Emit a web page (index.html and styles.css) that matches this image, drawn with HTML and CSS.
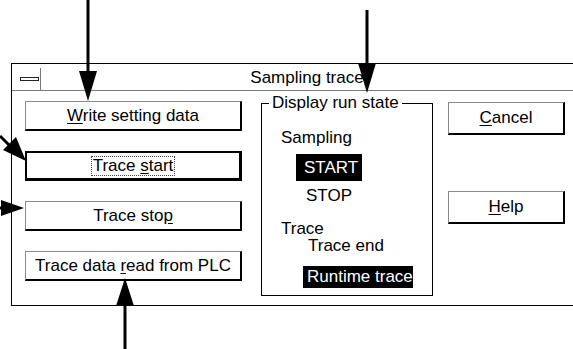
FILE: index.html
```html
<!DOCTYPE html>
<html>
<head>
<meta charset="utf-8">
<link rel="stylesheet" href="styles.css">
</head>
<body>
<div class="window">
  <div class="titlebar">
    <div class="sysmenu"><span class="minus"></span></div>
    <div class="title">Sampling trace</div>
  </div>
  <div class="content">
    <div class="leftcol">
      <div class="btn"><span><u>W</u>rite setting data</span></div>
      <div class="btn btn-default"><span class="focus">Trace <u>s</u>tart</span></div>
      <div class="btn"><span>Trace sto<u>p</u></span></div>
      <div class="btn"><span>Trace data <u>r</u>ead from PLC</span></div>
    </div>
    <fieldset class="group">
      <legend class="legend">Display run state</legend>
      <div class="lbl l-sampling">Sampling</div>
      <div class="hl hl-start">START</div>
      <div class="lbl l-stop">STOP</div>
      <div class="lbl l-trace">Trace</div>
      <div class="lbl l-traceend">Trace end</div>
      <div class="hl hl-runtime">Runtime trace</div>
    </fieldset>
    <div class="rightcol">
      <div class="btn btn-side"><span><u>C</u>ancel</span></div>
      <div class="btn btn-side btn-help"><span><u>H</u>elp</span></div>
    </div>
  </div>
</div>
<svg class="arrows" width="573" height="349" viewBox="0 0 573 349">
  <g stroke="#000" stroke-width="3" fill="none">
    <line x1="88" y1="0" x2="88" y2="76"/>
    <line x1="367" y1="10" x2="367" y2="68"/>
    <line x1="0" y1="136" x2="12" y2="148"/>
    <line x1="0" y1="208" x2="6" y2="208"/>
    <line x1="125" y1="300" x2="125" y2="349"/>
  </g>
  <g fill="#000">
    <polygon points="79,71 97,71 88,101"/>
    <polygon points="358,63 376,63 367,93"/>
    <polygon points="3,150 16,137 26,161"/>
    <polygon points="1,200 1,216 24,208"/>
    <polygon points="116,306 134,306 125,278"/>
  </g>
</svg>
</body>
</html>
```
FILE: styles.css
```css
html, body {
  margin: 0;
  padding: 0;
  background: #fff;
}
body {
  width: 573px;
  height: 349px;
  overflow: hidden;
  position: relative;
  font-family: "Liberation Sans", Arial, sans-serif;
  font-size: 17px;
  color: #000;
}
.window {
  margin: 63px 0 0 11px;
  width: 562px;
  height: 243px;
  box-sizing: border-box;
  border: 1px solid #000;
  border-right: none;
}
.titlebar {
  height: 26px;
  border-bottom: 1px solid #7a7a7a;
  display: flex;
  align-items: stretch;
}
.sysmenu {
  width: 27px;
  margin-top: 4px;
  border-right: 1px solid #7a7a7a;
  display: flex;
  align-items: flex-start;
  justify-content: flex-end;
  padding-right: 1px;
}
.minus {
  display: block;
  width: 17px;
  height: 2px;
  margin-top: 9px;
  border: 1px solid #222;
  background: #fff;
}
.title {
  flex: 1;
  text-align: center;
  line-height: 18px;
  padding-top: 5px;
}
.content {
  display: flex;
  align-items: flex-start;
  padding: 0 0 0 13px;
}
.leftcol {
  width: 217px;
  padding-top: 10px;
  display: flex;
  flex-direction: column;
  gap: 20px;
}
.btn {
  box-sizing: border-box;
  height: 30px;
  border-top: 1px solid #8a8a8a;
  border-left: 1px solid #8a8a8a;
  border-right: 2px solid #000;
  border-bottom: 2px solid #000;
  display: flex;
  align-items: center;
  justify-content: center;
  line-height: 18px;
  white-space: nowrap;
}
.btn-default {
  border: 2px solid #000;
  border-right-width: 3px;
  border-bottom-width: 3px;
}
.focus {
  outline: 1px dotted #444;
  outline-offset: 0px;
  padding: 0 1px;
}
u {
  text-decoration: underline;
  text-underline-offset: 2px;
}
.group {
  box-sizing: border-box;
  width: 172px;
  margin: 3px 0 0 19px;
  padding: 0 0 7px 0;
  border: 1px solid #000;
  min-width: 0;
}
.legend {
  margin-left: 7px;
  padding: 0 3px;
  line-height: 18px;
}
.lbl {
  line-height: 18px;
  height: 18px;
  white-space: nowrap;
}
.hl {
  background: #000;
  color: #fff;
  white-space: nowrap;
  box-sizing: border-box;
}
.l-sampling { margin: 17px 0 0 19px; }
.hl-start {
  margin: 7px 0 0 34px;
  width: 66px;
  height: 27px;
  line-height: 27px;
  padding-left: 8px;
}
.l-stop { margin: 6px 0 0 44px; }
.l-trace { margin: 15px 0 0 19px; }
.l-traceend { margin: -1px 0 0 46px; }
.hl-runtime {
  margin: 11px 0 0 41px;
  width: 110px;
  height: 22px;
  line-height: 22px;
  padding-left: 4px;
}
.rightcol {
  margin: 11px 0 0 15px;
  width: 117px;
  display: flex;
  flex-direction: column;
  gap: 56px;
}
.btn-side {
  height: 33px;
}
.arrows {
  position: absolute;
  left: 0;
  top: 0;
  pointer-events: none;
}
```
